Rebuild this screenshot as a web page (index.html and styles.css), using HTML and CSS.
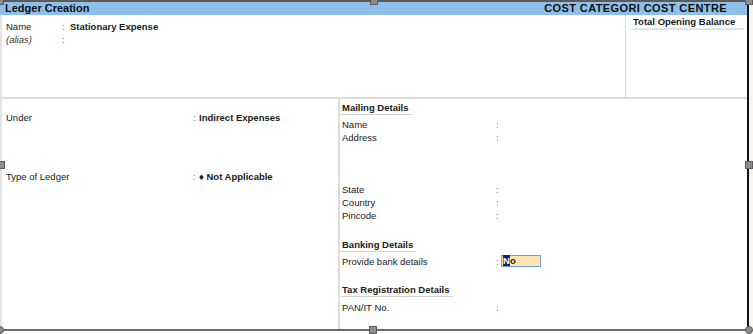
FILE: index.html
```html
<!DOCTYPE html>
<html>
<head>
    <title>Ledger Creation</title>
    <link rel="stylesheet" href="styles.css">
</head>
<body>
    <div class="frame">
        <div class="header">
            <span>Ledger Creation</span>
            <span class="header-right">COST CATEGORI COST CENTRE</span>
        </div>

        <div class="top">
            <div class="top-left">
                <div class="row"><span class="lbl-short">Name</span><span class="colon">:</span><b>Stationary Expense</b></div>
                <div class="row"><span class="lbl-short alias">(alias)</span><span class="colon">:</span></div>
            </div>
            <div class="balance">
                <div class="balance-title">Total Opening Balance</div>
            </div>
        </div>

        <div class="bottom">
            <div class="left-col">
                <div class="row under"><span class="lbl-wide">Under</span><span class="colon">:</span><b>Indirect Expenses</b></div>
                <div class="row ledger-type"><span class="lbl-wide">Type of Ledger</span><span class="colon">:</span><b>&#9830; Not Applicable</b></div>
            </div>
            <div class="right-col">
                <div class="heading mailing">Mailing Details</div>
                <div class="row"><span class="lbl-mid">Name</span><span class="colon">:</span></div>
                <div class="row"><span class="lbl-mid">Address</span><span class="colon">:</span></div>
                <div class="row state"><span class="lbl-mid">State</span><span class="colon">:</span></div>
                <div class="row"><span class="lbl-mid">Country</span><span class="colon">:</span></div>
                <div class="row"><span class="lbl-mid">Pincode</span><span class="colon">:</span></div>

                <div class="heading banking">Banking Details</div>
                <div class="row bank"><span class="lbl-mid">Provide bank details</span><span class="colon">:</span><span class="field"><span class="cursor">N</span>o</span></div>

                <div class="heading tax">Tax Registration Details</div>
                <div class="row pan"><span class="lbl-mid">PAN/IT No.</span><span class="colon">:</span></div>
            </div>
        </div>

        <!-- selection handles -->
        <span class="handle h-tl"></span>
        <span class="handle h-tm"></span>
        <span class="handle h-tr"></span>
        <span class="handle h-ml"></span>
        <span class="handle h-mr"></span>
        <span class="handle round h-bl"></span>
        <span class="handle h-bm"></span>
        <span class="handle round h-br"></span>
    </div>
</body>
</html>
```

FILE: styles.css
```css
body {
    margin: 0;
    width: 753px;
    height: 334px;
    overflow: hidden;
    background: linear-gradient(to right, #fff 0, #fff 749px, #eef1fb 750px, #fdf8e6 753px);
    font-family: "Liberation Sans", Arial, sans-serif;
    font-size: 9.5px;
    color: #1a1a1a;
}
.frame {
    position: relative;
    width: 747px;
    height: 327px;
    border-top: 2px solid #5a5a5a;
    border-bottom: 2px solid #6a6a6a;
    border-right: 2px solid #111;
    background: #fff;
    display: flex;
    flex-direction: column;
}
.header {
    height: 13px;
    line-height: 13px;
    background: #8dbfe8;
    display: flex;
    justify-content: space-between;
    padding: 0 20px 0 5px;
    font-size: 11px;
    font-weight: bold;
    color: #111;
}
.header-right {
    letter-spacing: 0.4px;
}
.top {
    height: 82px;
    display: flex;
    border-left: 2px solid #e4e4e4;
    border-bottom: 2px solid #dcdcdc;
}
.top-left {
    flex: 1;
    padding: 5px 0 0 4px;
}
.balance {
    box-sizing: border-box;
    width: 122px;
    border-left: 1px solid #d8d8d8;
    padding: 1px 3px 0 5px;
}
.balance-title {
    font-weight: bold;
    line-height: 12px;
    border-bottom: 2px solid #e2e2e2;
    padding-left: 2px;
}
.row {
    display: flex;
    line-height: 13px;
    height: 13px;
    white-space: nowrap;
}
.row b {
    font-weight: bold;
}
.colon {
    color: #777;
    width: 8px;
}
.lbl-short {
    width: 56px;
}
.alias {
    font-style: italic;
    color: #333;
}
.bottom {
    flex: 1;
    display: grid;
    grid-template-columns: 338px 1fr;
    border-left: 2px solid #e4e4e4;
}
.left-col {
    border-right: 2px solid #dcdcdc;
    padding-left: 4px;
}
.lbl-wide {
    width: 187px;
}
.left-col .colon {
    width: 6px;
}
.under {
    margin-top: 12px;
}
.ledger-type {
    margin-top: 46px;
}
.right-col {
    padding-left: 2px;
}
.heading {
    display: table;
    font-weight: bold;
    line-height: 13px;
    padding: 0 3px 0 1px;
    border-bottom: 1px solid #cfcfcf;
    margin-left: -1px;
}
.mailing {
    margin-top: 2px;
    margin-bottom: 3px;
}
.lbl-mid {
    width: 154px;
}
.right-col .colon {
    width: 5px;
}
.state {
    margin-top: 39px;
}
.banking {
    margin-top: 16px;
    margin-bottom: 2px;
}
.bank {
    height: 14px;
    align-items: center;
}
.field {
    width: 37px;
    height: 10px;
    line-height: 10px;
    background: #fde4b2;
    border: 1px solid #6f9fd6;
    font-weight: bold;
    padding-left: 1px;
}
.cursor {
    background: #14246a;
    color: #fff;
}
.tax {
    margin-top: 15px;
    margin-bottom: 4px;
}
.handle {
    position: absolute;
    width: 6px;
    height: 6px;
    background: #8c8c8c;
    border: 1px solid #5c5c5c;
}
.handle.round {
    border-radius: 50%;
}
.h-tl { left: -4px; top: -5px; }
.h-tm { left: 370px; top: -5px; }
.h-tr { right: -6px; top: -5px; }
.h-ml { left: -3px; top: 159px; }
.h-mr { right: -6px; top: 159px; }
.h-bl { left: -4px; bottom: -5px; }
.h-bm { left: 369px; bottom: -5px; }
.h-br { right: -6px; bottom: -5px; }
```
